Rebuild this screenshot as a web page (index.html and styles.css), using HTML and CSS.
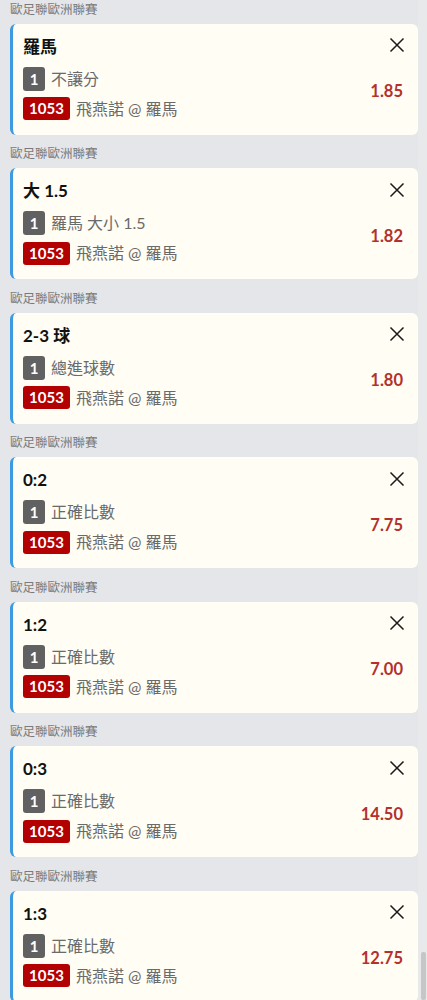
FILE: index.html
```html
<!DOCTYPE html>
<html lang="zh-Hant">
<head>
<meta charset="utf-8">
<title>投注單</title>
<link rel="stylesheet" href="styles.css">
</head>
<body>
<div class="list">
  <div class="group">
    <div class="league">歐足聯歐洲聯賽</div>
    <div class="card">
      <div class="head"><span class="title">羅馬</span><button class="close" aria-label="close"><svg viewBox="0 0 16 16" width="16" height="16"><path d="M1.5 1.5 L14.5 14.5 M14.5 1.5 L1.5 14.5" stroke="#1a1a1a" stroke-width="1.5" fill="none"/></svg></button></div>
      <div class="body">
        <div class="rows">
          <div class="row"><span class="tag gray">1</span><span class="txt">不讓分</span></div>
          <div class="row"><span class="tag red">1053</span><span class="txt">飛燕諾 @ 羅馬</span></div>
        </div>
        <div class="odds">1.85</div>
      </div>
    </div>
  </div>
  <div class="group">
    <div class="league">歐足聯歐洲聯賽</div>
    <div class="card">
      <div class="head"><span class="title">大 1.5</span><button class="close" aria-label="close"><svg viewBox="0 0 16 16" width="16" height="16"><path d="M1.5 1.5 L14.5 14.5 M14.5 1.5 L1.5 14.5" stroke="#1a1a1a" stroke-width="1.5" fill="none"/></svg></button></div>
      <div class="body">
        <div class="rows">
          <div class="row"><span class="tag gray">1</span><span class="txt">羅馬 大小 1.5</span></div>
          <div class="row"><span class="tag red">1053</span><span class="txt">飛燕諾 @ 羅馬</span></div>
        </div>
        <div class="odds">1.82</div>
      </div>
    </div>
  </div>
  <div class="group">
    <div class="league">歐足聯歐洲聯賽</div>
    <div class="card">
      <div class="head"><span class="title">2-3 球</span><button class="close" aria-label="close"><svg viewBox="0 0 16 16" width="16" height="16"><path d="M1.5 1.5 L14.5 14.5 M14.5 1.5 L1.5 14.5" stroke="#1a1a1a" stroke-width="1.5" fill="none"/></svg></button></div>
      <div class="body">
        <div class="rows">
          <div class="row"><span class="tag gray">1</span><span class="txt">總進球數</span></div>
          <div class="row"><span class="tag red">1053</span><span class="txt">飛燕諾 @ 羅馬</span></div>
        </div>
        <div class="odds">1.80</div>
      </div>
    </div>
  </div>
  <div class="group">
    <div class="league">歐足聯歐洲聯賽</div>
    <div class="card">
      <div class="head"><span class="title">0:2</span><button class="close" aria-label="close"><svg viewBox="0 0 16 16" width="16" height="16"><path d="M1.5 1.5 L14.5 14.5 M14.5 1.5 L1.5 14.5" stroke="#1a1a1a" stroke-width="1.5" fill="none"/></svg></button></div>
      <div class="body">
        <div class="rows">
          <div class="row"><span class="tag gray">1</span><span class="txt">正確比數</span></div>
          <div class="row"><span class="tag red">1053</span><span class="txt">飛燕諾 @ 羅馬</span></div>
        </div>
        <div class="odds">7.75</div>
      </div>
    </div>
  </div>
  <div class="group">
    <div class="league">歐足聯歐洲聯賽</div>
    <div class="card">
      <div class="head"><span class="title">1:2</span><button class="close" aria-label="close"><svg viewBox="0 0 16 16" width="16" height="16"><path d="M1.5 1.5 L14.5 14.5 M14.5 1.5 L1.5 14.5" stroke="#1a1a1a" stroke-width="1.5" fill="none"/></svg></button></div>
      <div class="body">
        <div class="rows">
          <div class="row"><span class="tag gray">1</span><span class="txt">正確比數</span></div>
          <div class="row"><span class="tag red">1053</span><span class="txt">飛燕諾 @ 羅馬</span></div>
        </div>
        <div class="odds">7.00</div>
      </div>
    </div>
  </div>
  <div class="group">
    <div class="league">歐足聯歐洲聯賽</div>
    <div class="card">
      <div class="head"><span class="title">0:3</span><button class="close" aria-label="close"><svg viewBox="0 0 16 16" width="16" height="16"><path d="M1.5 1.5 L14.5 14.5 M14.5 1.5 L1.5 14.5" stroke="#1a1a1a" stroke-width="1.5" fill="none"/></svg></button></div>
      <div class="body">
        <div class="rows">
          <div class="row"><span class="tag gray">1</span><span class="txt">正確比數</span></div>
          <div class="row"><span class="tag red">1053</span><span class="txt">飛燕諾 @ 羅馬</span></div>
        </div>
        <div class="odds">14.50</div>
      </div>
    </div>
  </div>
  <div class="group">
    <div class="league">歐足聯歐洲聯賽</div>
    <div class="card">
      <div class="head"><span class="title">1:3</span><button class="close" aria-label="close"><svg viewBox="0 0 16 16" width="16" height="16"><path d="M1.5 1.5 L14.5 14.5 M14.5 1.5 L1.5 14.5" stroke="#1a1a1a" stroke-width="1.5" fill="none"/></svg></button></div>
      <div class="body">
        <div class="rows">
          <div class="row"><span class="tag gray">1</span><span class="txt">正確比數</span></div>
          <div class="row"><span class="tag red">1053</span><span class="txt">飛燕諾 @ 羅馬</span></div>
        </div>
        <div class="odds">12.75</div>
      </div>
    </div>
  </div>
</div>
<div class="scroll-track"><div class="scroll-thumb"></div></div>
</body>
</html>
```

FILE: styles.css
```css
* { box-sizing: border-box; }
html, body {
  margin: 0;
  padding: 0;
  background: #e4e6e9;
  overflow: hidden;
}
body {
  font-family: Lato, "Noto Sans CJK TC", "Noto Sans", sans-serif;
  color: #222;
  height: 1000px;
}
.list {
  padding: 0 9px 0 10px;
  display: flex;
  flex-direction: column;
}
.group { padding-bottom: 10px; }
.league {
  height: 20px;
  line-height: 20px;
  font-size: 12.5px;
  color: #7a7a7a;
  margin-bottom: 4px;
  margin-top: -0.5px;
}
.card {
  background: #fffdf4;
  border-left: 3px solid #3a9be0;
  border-radius: 6px;
  padding: 12px 13px 14px 10px;
  height: 111px;
}
.head {
  display: flex;
  align-items: center;
  justify-content: space-between;
  height: 22px;
  margin-bottom: 9px;
}
.title {
  font-size: 17px;
  font-weight: 700;
  color: #111;
  line-height: 22px;
}
.close {
  border: 0;
  background: none;
  padding: 0;
  width: 16px;
  height: 16px;
  margin-top: -3px;
  margin-right: 0;
  display: flex;
}
.body {
  display: flex;
  align-items: center;
  justify-content: space-between;
}
.rows {
  display: flex;
  flex-direction: column;
  gap: 6px;
}
.row {
  display: flex;
  align-items: center;
  gap: 6px;
  height: 24px;
}
.tag {
  height: 24px;
  line-height: 24px;
  border-radius: 3px;
  color: #fff;
  font-weight: 700;
  font-size: 15px;
  text-align: center;
}
.tag.gray { background: #616161; width: 22px; }
.tag.red { background: #b30000; width: 47px; height: 23px; line-height: 23px; }
.txt {
  font-size: 16px;
  color: #6a6a6a;
  line-height: 24px;
}
.odds {
  font-size: 16.5px;
  font-weight: 700;
  color: #b3302b;
  margin-top: -5px;
  margin-right: 2px;
}
.scroll-track {
  position: fixed;
  top: 0;
  right: 0;
  width: 9px;
  height: 1000px;
  background: #e8e9eb;
}
.scroll-thumb {
  position: absolute;
  right: 1px;
  top: 952px;
  width: 5px;
  height: 48px;
  background: #c6c6c6;
  border-radius: 2px;
}
```
